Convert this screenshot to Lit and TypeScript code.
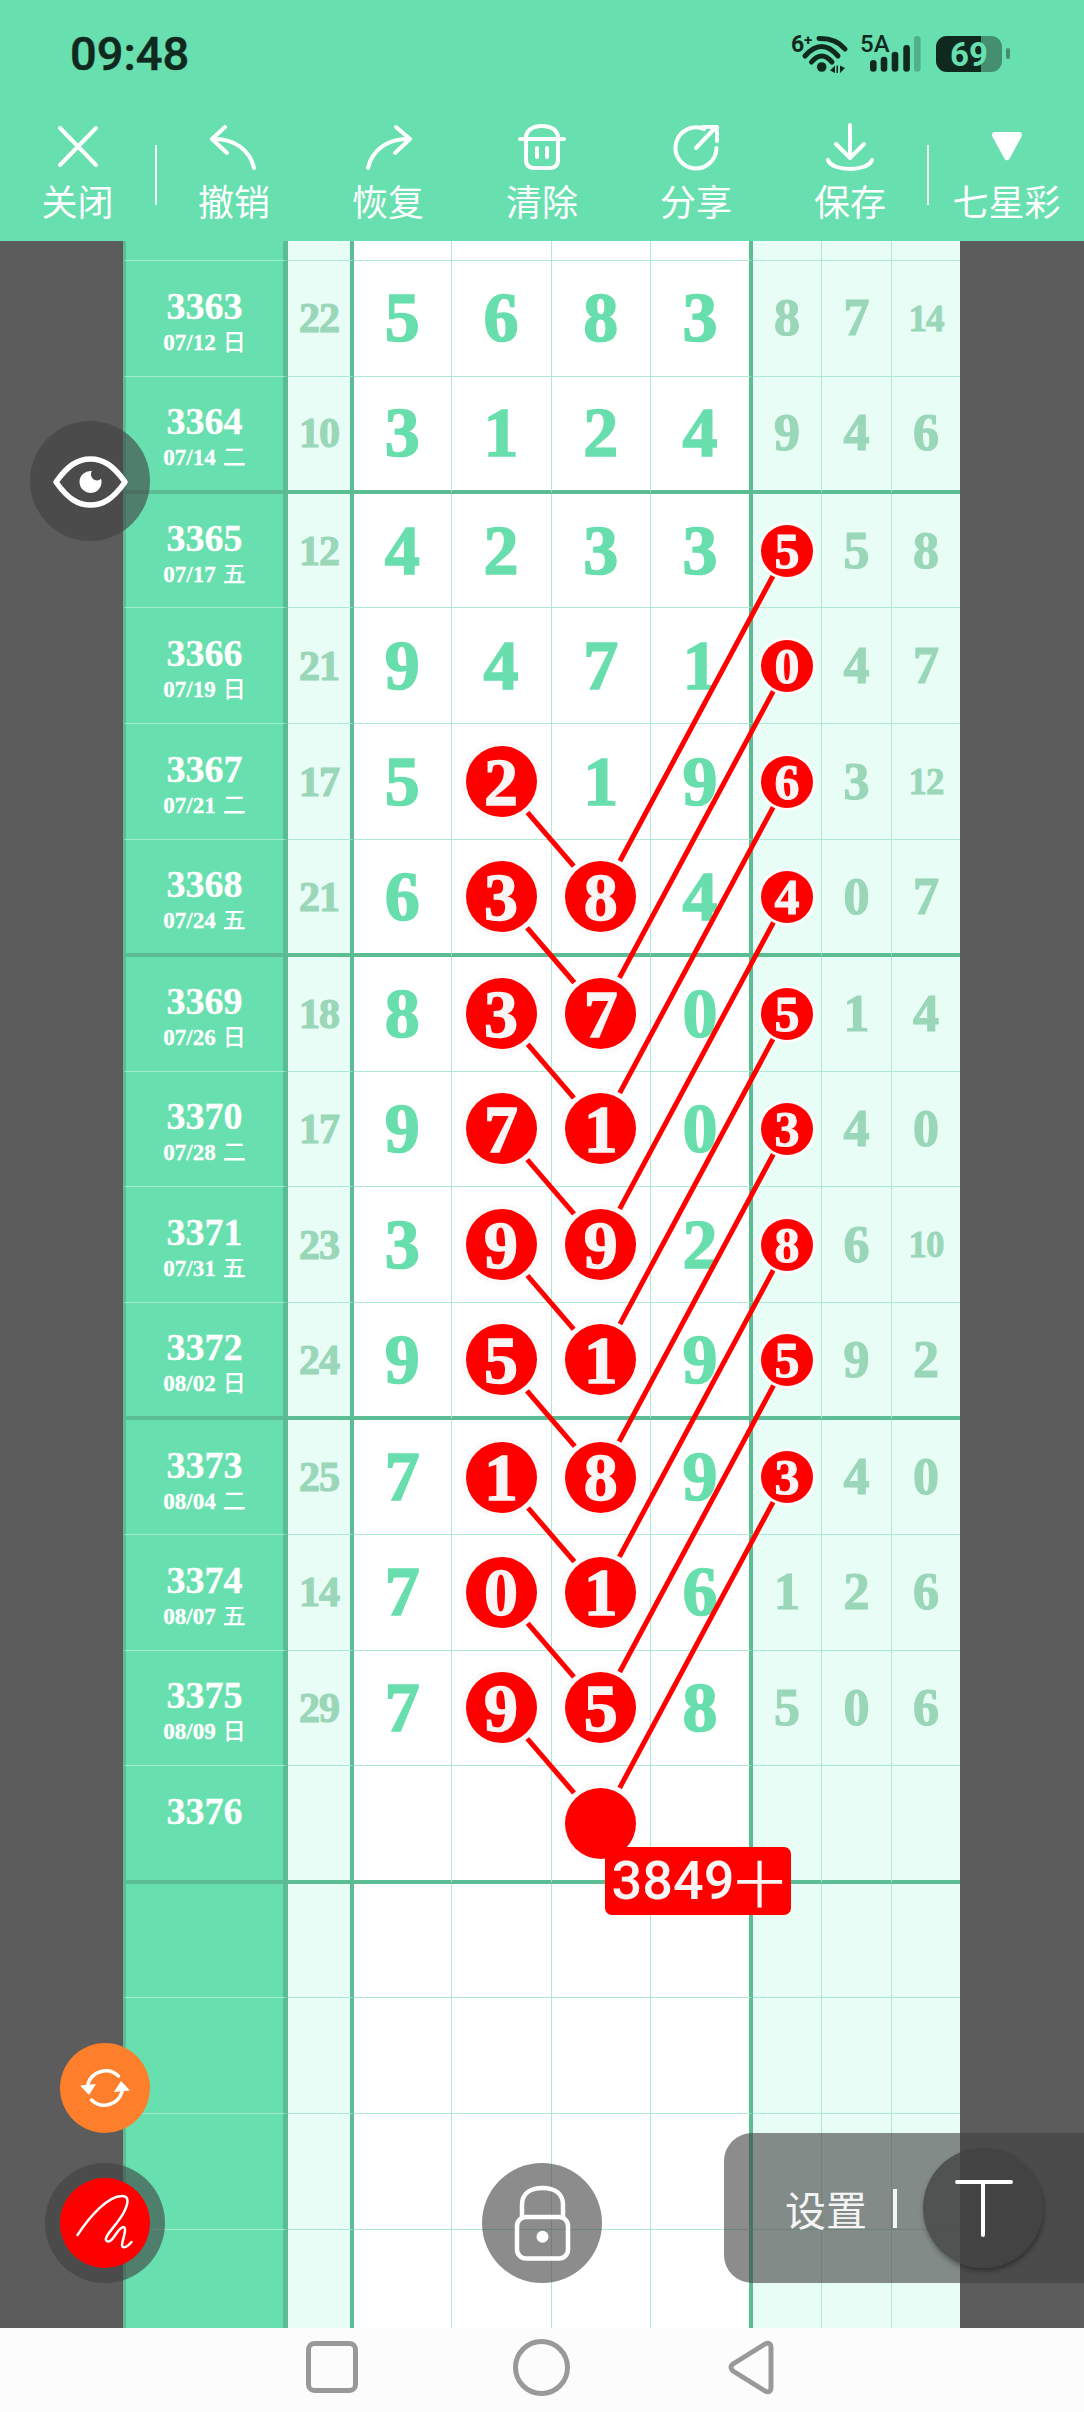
import { LitElement, html, svg, css } from 'lit';
import { customElement } from 'lit/decorators.js';

interface Draw {
  no: string;
  date: string;
  day: string;
  sum: string;
  nums: string[];
  hits: number[];
}

const draw = (no: string, date: string, day: string, sum: string, nums: string, tail: string, hits: number[]): Draw => ({
  no,
  date,
  day,
  sum,
  nums: [...nums.split(''), ...tail.split(' ')],
  hits,
});

const DRAWS: Draw[] = [
  draw('3363', '07/12', '日', '22', '5683', '8 7 14', []),
  draw('3364', '07/14', '二', '10', '3124', '9 4 6', []),
  draw('3365', '07/17', '五', '12', '4233', '5 5 8', [4]),
  draw('3366', '07/19', '日', '21', '9471', '0 4 7', [4]),
  draw('3367', '07/21', '二', '17', '5219', '6 3 12', [1, 4]),
  draw('3368', '07/24', '五', '21', '6384', '4 0 7', [1, 2, 4]),
  draw('3369', '07/26', '日', '18', '8370', '5 1 4', [1, 2, 4]),
  draw('3370', '07/28', '二', '17', '9710', '3 4 0', [1, 2, 4]),
  draw('3371', '07/31', '五', '23', '3992', '8 6 10', [1, 2, 4]),
  draw('3372', '08/02', '日', '24', '9519', '5 9 2', [1, 2, 4]),
  draw('3373', '08/04', '二', '25', '7189', '3 4 0', [1, 2, 4]),
  draw('3374', '08/07', '五', '14', '7016', '1 2 6', [1, 2]),
  draw('3375', '08/09', '日', '29', '7958', '5 0 6', [1, 2]),
  { no: '3376', date: '', day: '', sum: '', nums: ['', '', '', '', '', '', ''], hits: [2] },
];

// board space: x from 123, y from 241
const ROW_H = 115.8;
const STRIP_H = 20;
const CENTER_X: Record<number, number> = { 1: 377.75, 2: 477.5, 4: 664 };
const centerY = (i: number) => STRIP_H + ROW_H * i + 57.2;

const TOOLS = [
  { label: '撤销', d: 'M21 5L8 17L23 31M8 17C30 16 46 28 50 46' },
  { label: '恢复', d: 'M38 5L52 17L37 31M52 17C30 16 14 28 10 46' },
  {
    label: '清除',
    d: 'M14 16C14 8 21 4 30 4C39 4 46 8 46 16M8 17H52M14 17V38C14 44 18 46 23 46H37C42 46 46 44 46 38V17M25 26V35M35 26V35',
  },
  { label: '分享', d: 'M38 7A20.5 20.5 0 1 0 50.5 26M30 26L50 5M36 5H51V19' },
  { label: '保存', d: 'M30 3V36M16 22L30 36L44 22M8 38C12 50 48 50 52 38' },
];

@customElement('app-root')
export class AppRoot extends LitElement {
  static styles = css`
    :host {
      position: relative;
      width: 1084px;
      height: 2412px;
      overflow: hidden;
      display: flex;
      flex-direction: column;
      font-family: 'Liberation Serif', 'Noto Sans CJK SC', serif;
      background: #5c5c5c;
    }

    header {
      height: 241px;
      flex: none;
      background: #68dfae;
      color: #fff;
    }

    .status {
      height: 106px;
      padding: 0 72px 16px 70px;
      display: flex;
      align-items: center;
      justify-content: space-between;
    }

    .time {
      font: 500 47px Roboto, sans-serif;
      color: #10291e;
      -webkit-text-stroke: 0.5px #10291e;
    }

    .status svg text {
      font-family: Roboto, sans-serif;
    }

    .tools {
      display: grid;
      grid-template-columns: 155px 2px repeat(5, 1fr) 2px 155px;
      align-items: start;
    }

    .tool {
      display: flex;
      flex-direction: column;
      align-items: center;
      font: 400 36px/40px 'Noto Sans CJK SC', sans-serif;
      gap: 8px;
    }

    .tool svg {
      display: block;
      fill: none;
      stroke: #fff;
      stroke-width: 4;
      stroke-linecap: round;
      stroke-linejoin: round;
    }

    .tool span {
      white-space: nowrap;
    }

    .divider {
      margin-top: 23px;
      height: 60px;
      background: rgba(255, 255, 255, 0.9);
    }

    main {
      flex: 1;
      min-height: 0;
      padding: 0 124px 0 123px;
      overflow: hidden;
    }

    .board {
      position: relative;
      width: 837px;
    }

    .row {
      display: grid;
      grid-template-columns: 165px 66px 97.5px 100px 99.5px 102px 69px 70px 68px;
      height: 115.8px;
    }

    .row.strip {
      height: 20px;
    }

    .row.thick {
      height: 117.3px;
    }

    .row.thick + .row {
      height: 114.3px;
    }

    .cell {
      box-sizing: border-box;
      display: flex;
      align-items: center;
      justify-content: center;
      background: #fff;
      color: #68dead;
      font-weight: 700;
      font-size: 70px;
      line-height: 1;
      -webkit-text-stroke: 1.6px #68dead;
      border-right: 1.5px solid #aee9d4;
      border-bottom: 1.5px solid #aee9d4;
      min-width: 0;
    }

    .name {
      flex-direction: column;
      background: #68dfae;
      color: #fff;
      -webkit-text-stroke: 0.3px #fff;
      border-left: 3px solid #5cbd95;
      border-right: 5px solid #5cbd95;
      border-bottom-color: #a3ebcf;
    }

    .no {
      font-size: 38px;
      line-height: 40px;
      margin-top: 6px;
    }

    .date {
      font-size: 23px;
      line-height: 28px;
      min-height: 28px;
      white-space: nowrap;
    }

    .date span {
      margin-left: 7px;
      font: 500 23px/28px 'Noto Sans CJK SC', sans-serif;
      -webkit-text-stroke: 0;
    }

    .sum,
    .extra {
      background: #e7fdf5;
      color: #9ad6b8;
      font-size: 52px;
      -webkit-text-stroke: 1.2px #9ad6b8;
    }

    .sum {
      font-size: 42px;
      letter-spacing: -1px;
      border-right: 4.5px solid #5cbd95;
    }

    .extra.small {
      font-size: 37px;
      letter-spacing: -1px;
      -webkit-text-stroke: 0.8px #9ad6b8;
    }

    .extra.last {
      border-right: none;
    }

    .edge {
      border-right: 4.5px solid #5cbd95;
    }

    .row.thick .cell {
      border-bottom: 4.5px solid #5cbd95;
    }

    .ball {
      position: relative;
      z-index: 2;
      flex: none;
      display: flex;
      align-items: center;
      justify-content: center;
      width: 71px;
      height: 71px;
      border-radius: 50%;
      background: #ff0000;
      color: #faf5f5;
      font-size: 68px;
      letter-spacing: 0;
      -webkit-text-stroke: 1.4px #faf5f5;
      box-shadow: 0 0 0 5px #fafafa;
    }

    .ball.minor {
      width: 52px;
      height: 52px;
      font-size: 50px;
      -webkit-text-stroke: 1px #faf5f5;
      box-shadow: 0 0 0 3px #fbfbfb;
    }

    .links {
      position: absolute;
      left: 0;
      top: 0;
      z-index: 1;
      pointer-events: none;
    }

    .links line {
      stroke: #ff0000;
      stroke-width: 5;
    }

    .tag {
      position: absolute;
      z-index: 3;
      left: 605px;
      top: 1847px;
      box-sizing: border-box;
      width: 186px;
      height: 68px;
      border-radius: 7px;
      background: #ff0000;
      color: #faf5f5;
      display: flex;
      align-items: center;
      justify-content: center;
      font: 500 54px/1 Roboto, sans-serif;
    }

    .tag span {
      font: 400 50px/1 'Noto Sans CJK SC', sans-serif;
    }

    .fab {
      position: absolute;
      z-index: 3;
      width: 120px;
      height: 120px;
      border-radius: 50%;
      background: rgba(64, 64, 64, 0.6);
      display: flex;
      align-items: center;
      justify-content: center;
    }

    .fab svg {
      display: block;
    }

    .eye {
      left: 30px;
      top: 421px;
    }

    .pen {
      left: 45px;
      top: 2163px;
    }

    .lock {
      left: 482px;
      top: 2163px;
    }

    .disc {
      width: 90px;
      height: 90px;
      border-radius: 50%;
    }

    .disc.red {
      background: #ff0000;
    }

    .sync {
      position: absolute;
      z-index: 3;
      left: 60px;
      top: 2043px;
      background: #fd7e2b;
    }

    .settings {
      position: absolute;
      z-index: 3;
      left: 724px;
      top: 2133px;
      right: 0;
      height: 150px;
      box-sizing: border-box;
      padding-left: 61px;
      border-radius: 28px 0 0 28px;
      background: rgba(64, 64, 64, 0.6);
      display: flex;
      align-items: center;
      gap: 26px;
      color: #f4f4f4;
      font: 400 41px/1 'Noto Sans CJK SC', sans-serif;
    }

    .bar {
      width: 3.5px;
      height: 39px;
      background: #f4f4f4;
    }

    .type {
      width: 120px;
      height: 120px;
      border-radius: 50%;
      background: rgba(64, 64, 64, 0.75);
      box-shadow: 1px 3px 5px rgba(0, 0, 0, 0.35);
      display: flex;
      align-items: center;
      justify-content: center;
    }

    nav {
      height: 84px;
      flex: none;
      box-sizing: border-box;
      padding: 0 0 6px 306px;
      background: #fcfcfc;
      display: flex;
      align-items: center;
    }

    nav svg {
      display: block;
      fill: none;
      stroke: #999;
      stroke-width: 5;
    }

    nav .home {
      margin: 0 157px 0 155px;
    }
  `;

  private renderStatus() {
    return html`
      <svg width="222" height="46" viewBox="790 30 222 46">
        <text x="791" y="52" font-size="23" font-weight="700" fill="#10291e">6</text>
        <text x="804" y="45" font-size="15" font-weight="700" fill="#10291e">+</text>
        <path
          d="M811.5 62Q821.7 50 832 62M805 56Q821.7 37 838 56M819 38.5Q836 38 845 49"
          fill="none"
          stroke="#10291e"
          stroke-width="5"
          stroke-linecap="round"
        />
        <circle cx="821.7" cy="67" r="4.8" fill="#10291e" />
        <path d="M830 70.5L835 65.5V73ZM836.5 65.5H838V73H836.5ZM840 65.5L845 68L840 73Z" fill="#10291e" />
        <text x="860" y="52" font-size="24" font-weight="500" fill="#10291e">5A</text>
        <rect x="870" y="60" width="6.6" height="11.7" rx="3.3" fill="#10291e" />
        <rect x="880.7" y="56.7" width="6.6" height="15" rx="3.3" fill="#10291e" />
        <rect x="891.7" y="51.7" width="6.6" height="20" rx="3.3" fill="#10291e" />
        <rect x="903.3" y="45" width="6.6" height="26.7" rx="3.3" fill="#10291e" />
        <rect x="914" y="36" width="6.6" height="35.7" rx="3.3" fill="#4fb08a" />
        <clipPath id="charge"><rect x="936" y="36" width="45" height="36" /></clipPath>
        <rect x="936" y="36" width="66" height="36" rx="11" fill="#438f70" />
        <rect x="936" y="36" width="66" height="36" rx="11" fill="#10291e" clip-path="url(#charge)" />
        <rect x="1006" y="48" width="4" height="11" rx="2" fill="#438f70" />
        <text x="969" y="66" font-size="33" font-weight="700" fill="#68dfae" text-anchor="middle">69</text>
      </svg>
    `;
  }

  private renderTool(label: string, d: string) {
    return html`
      <div class="tool">
        <svg width="60" height="50" viewBox="0 0 60 50"><path d=${d} /></svg>
        <span>${label}</span>
      </div>
    `;
  }

  private renderRow(row: Draw | null, i: number) {
    const thick = i % 4 === 1 ? 'thick' : '';
    if (!row) {
      return html`<div class="row ${thick}">
        <div class="cell name"></div>
        <div class="cell sum"></div>
        <div class="cell"></div>
        <div class="cell"></div>
        <div class="cell"></div>
        <div class="cell edge"></div>
        <div class="cell extra"></div>
        <div class="cell extra"></div>
        <div class="cell extra last"></div>
      </div>`;
    }
    return html`<div class="row ${thick}">
      <div class="cell name">
        <div class="no">${row.no}</div>
        <div class="date">${row.date}<span>${row.day}</span></div>
      </div>
      <div class="cell sum">${row.sum}</div>
      ${row.nums.map((n, c) => {
        const hit = row.hits.includes(c);
        const cls = ['cell'];
        if (c === 3) cls.push('edge');
        if (c > 3) cls.push('extra');
        if (c === 6) cls.push('last');
        if (c > 3 && n.length > 1) cls.push('small');
        return html`<div class=${cls.join(' ')}>
          ${hit ? html`<span class="ball ${c > 3 ? 'minor' : ''}">${n}</span>` : n}
        </div>`;
      })}
    </div>`;
  }

  private renderLinks() {
    const segs: [number, number, number, number][] = [];
    DRAWS.forEach((row, i) => {
      if (row.hits.includes(1)) segs.push([CENTER_X[1], centerY(i), CENTER_X[2], centerY(i + 1)]);
      if (row.hits.includes(4)) segs.push([CENTER_X[4], centerY(i), CENTER_X[2], centerY(i + 3)]);
    });
    return html`<svg class="links" width="837" height="2087">
      ${segs.map(([x1, y1, x2, y2]) => svg`<line x1=${x1} y1=${y1} x2=${x2} y2=${y2} />`)}
    </svg>`;
  }

  render() {
    const empties = [null, null, null, null];
    return html`
      <header>
        <div class="status">
          <div class="time">09:48</div>
          ${this.renderStatus()}
        </div>
        <div class="tools">
          ${this.renderTool('关闭', 'M12 6L48 43M48 6L12 43')}
          <div class="divider"></div>
          ${TOOLS.map((t) => this.renderTool(t.label, t.d))}
          <div class="divider"></div>
          <div class="tool">
            <svg width="60" height="50" viewBox="0 0 60 50">
              <path d="M18 13H42L30 35Z" fill="#fff" stroke-width="6" />
            </svg>
            <span>七星彩</span>
          </div>
        </div>
      </header>

      <main>
        <div class="board">
          <div class="row strip">
            <div class="cell name"></div>
            <div class="cell sum"></div>
            <div class="cell"></div>
            <div class="cell"></div>
            <div class="cell"></div>
            <div class="cell edge"></div>
            <div class="cell extra"></div>
            <div class="cell extra"></div>
            <div class="cell extra last"></div>
          </div>
          ${[...DRAWS, ...empties].map((row, i) => this.renderRow(row, i))}
          ${this.renderLinks()}
        </div>
      </main>

      <nav>
        <svg width="52" height="52"><rect x="2.5" y="2.5" width="47" height="47" rx="6" /></svg>
        <svg class="home" width="57" height="57"><circle cx="28.5" cy="28.5" r="26" /></svg>
        <svg width="47" height="57">
          <path d="M38 5Q44 2.5 44 9V48Q44 54.5 38 52L6 32Q2 28.5 6 25Z" stroke-linejoin="round" />
        </svg>
      </nav>

      <div class="tag">3849<span>十</span></div>

      <div class="fab eye">
        <svg width="120" height="120" viewBox="0 0 120 120">
          <path
            d="M26 61C38 44 48 38 60.5 38C73 38 83 44 95 61C83 78 73 84 60.5 84C48 84 38 78 26 61Z"
            fill="none"
            stroke="#fff"
            stroke-width="5.5"
            stroke-linejoin="round"
          />
          <path d="M61.93 50.07A11 11 0 1 0 71.03 57.77A6 6 0 0 1 61.93 50.07Z" fill="#fff" />
        </svg>
      </div>

      <div class="disc sync">
        <svg width="90" height="90" viewBox="0 0 90 90" fill="none" stroke="#fff" stroke-width="3.5" stroke-linecap="round">
          <path d="M28 41A18.5 18.5 0 0 1 58.5 33" />
          <path d="M20 42.5L36 41L29 52Z" fill="#fff" stroke="none" />
          <g transform="rotate(180 45 45)">
            <path d="M28 41A18.5 18.5 0 0 1 58.5 33" />
            <path d="M20 42.5L36 41L29 52Z" fill="#fff" stroke="none" />
          </g>
        </svg>
      </div>

      <div class="fab pen">
        <div class="disc red">
          <svg width="90" height="90" viewBox="0 0 90 90">
            <path
              d="M17.5 57C30 38 48 18 62 18C70 18 68 26 64 34C58 46 44 58 46 62C48 66 52 62 56 56C60 50 65 46 65 52C65 58 60 68 63 69C66 70 69 67 71.5 64"
              fill="none"
              stroke="#fff"
              stroke-width="2.5"
              stroke-linecap="round"
            />
          </svg>
        </div>
      </div>

      <div class="fab lock">
        <svg width="120" height="120" viewBox="0 0 120 120" fill="none" stroke="#fff" stroke-width="4.5">
          <rect x="35" y="54" width="51" height="41.5" rx="9" />
          <path d="M40 54V42C40 31 48 25 60.5 25C73 25 81 31 81 42V54" />
          <ellipse cx="60.5" cy="73.7" rx="6" ry="6" fill="#fff" stroke="none" />
        </svg>
      </div>

      <div class="settings">
        <span>设置</span>
        <div class="bar"></div>
        <div class="type">
          <svg width="120" height="120" viewBox="0 0 120 120" fill="none" stroke="#fff" stroke-width="4" stroke-linecap="round">
            <path d="M34 34H88M60 34V87" />
          </svg>
        </div>
      </div>
    `;
  }
}

declare global {
  interface HTMLElementTagNameMap {
    'app-root': AppRoot;
  }
}
